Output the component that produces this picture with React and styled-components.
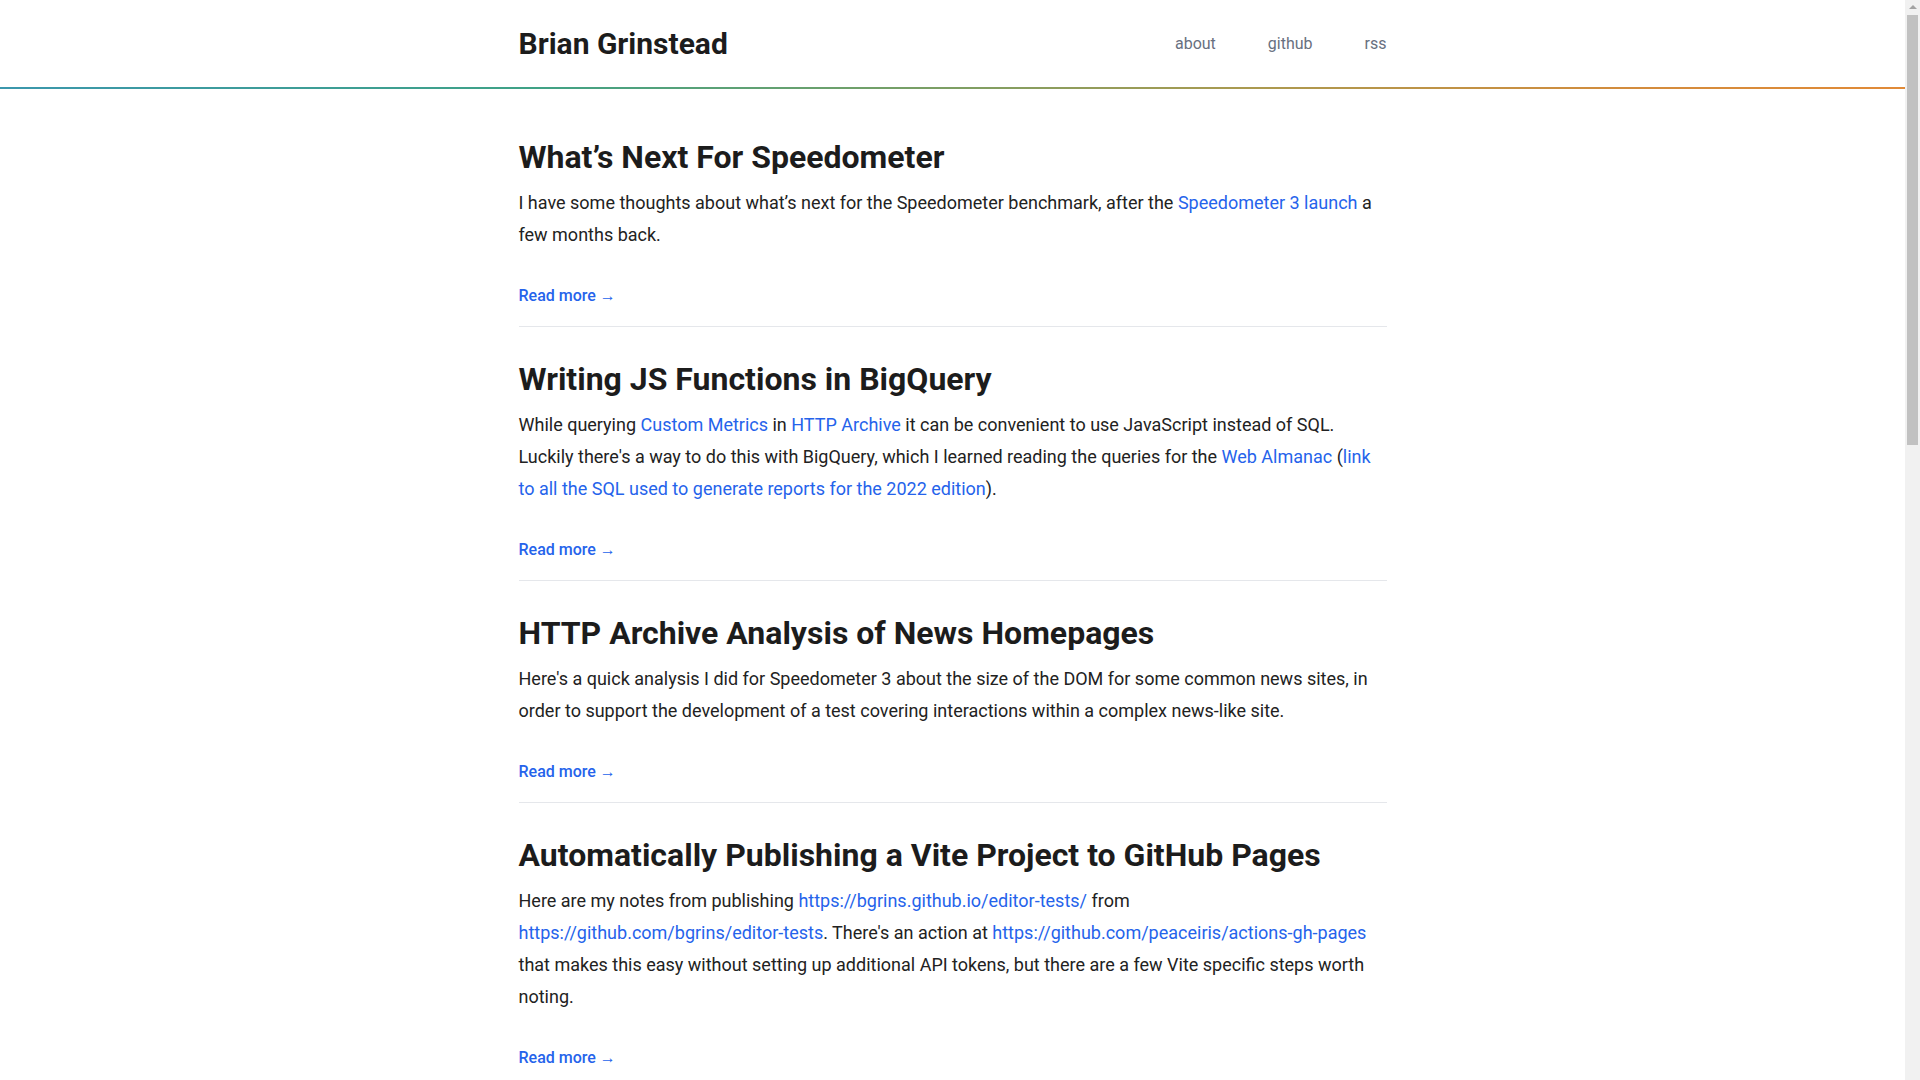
import React from 'react'
import styled, { createGlobalStyle } from 'styled-components'

const GlobalStyle = createGlobalStyle`
  html, body {
    margin: 0;
    padding: 0;
    background: #ffffff;
  }
  body {
    font-family: Roboto, "Liberation Sans", Arial, sans-serif;
    color: #222222;
    -webkit-font-smoothing: antialiased;
  }
  a {
    color: #2563eb;
    text-decoration: none;
  }
`

// the reference was taken with a classic scrollbar, so keep its 15px aside
const Page = styled.div`
  padding-right: 15px;
`

const ScrollRail = styled.div`
  position: fixed;
  top: 0;
  right: 0;
  bottom: 0;
  width: 15px;
  background: #f1f1f1;
  display: flex;
  flex-direction: column;
  align-items: center;
`

const ScrollArrow = styled.div`
  margin-top: 5px;
  width: 0;
  height: 0;
  border-left: 4px solid transparent;
  border-right: 4px solid transparent;
  border-bottom: 4px solid #a3a3a3;
`

const ScrollThumb = styled.div`
  margin-top: 6px;
  width: 11px;
  height: 430px;
  background: #c1c1c1;
`

const Header = styled.header`
  border-bottom: 2px solid transparent;
  border-image: linear-gradient(
      to right,
      #3b97ad 0%,
      #3fa286 28%,
      #6fa06a 45%,
      #a99a50 65%,
      #d28c3d 85%,
      #e18a37 100%
    )
    1;
`

const HeaderInner = styled.div`
  max-width: 900px;
  margin: 0 auto;
  padding: 0 16px;
  height: 87px;
  box-sizing: border-box;
  display: flex;
  align-items: center;
  justify-content: space-between;
`

const SiteTitle = styled.a`
  font-size: 30px;
  line-height: 36px;
  font-weight: 700;
  && {
    color: #1c1c1c;
  }
`

const Nav = styled.nav`
  display: flex;
  align-items: center;
  gap: 52px;
`

const NavLink = styled.a`
  font-size: 16px;
  line-height: 24px;
  && {
    color: #687080;
  }
`

const Main = styled.main`
  max-width: 900px;
  margin: 0 auto;
  padding: 16px 16px 64px;
  box-sizing: border-box;
`

const Post = styled.article`
  padding: 32px 0 16px;
  border-bottom: 1px solid #e5e7eb;
`

const PostTitle = styled.h2`
  margin: 0 0 10px;
  font-size: 32px;
  line-height: 40px;
  font-weight: 700;
  color: #1c1c1c;
`

const Excerpt = styled.p`
  margin: 0;
  font-size: 18px;
  line-height: 32px;
`

const ReadMore = styled.a`
  display: inline-block;
  margin-top: 31px;
  font-size: 16px;
  line-height: 28px;
  font-weight: 500;
`

const posts = [
  {
    title: 'What’s Next For Speedometer',
    body: (
      <>
        I have some thoughts about what’s next for the Speedometer benchmark, after the{' '}
        <a href="#">Speedometer 3 launch</a> a few months back.
      </>
    ),
  },
  {
    title: 'Writing JS Functions in BigQuery',
    body: (
      <>
        While querying <a href="#">Custom Metrics</a> in <a href="#">HTTP Archive</a> it can be
        convenient to use JavaScript instead of SQL. Luckily there's a way to do this with BigQuery,
        which I learned reading the queries for the <a href="#">Web Almanac</a> (
        <a href="#">link to all the SQL used to generate reports for the 2022 edition</a>).
      </>
    ),
  },
  {
    title: 'HTTP Archive Analysis of News Homepages',
    body: (
      <>
        Here's a quick analysis I did for Speedometer 3 about the size of the DOM for some common
        news sites, in order to support the development of a test covering interactions within a
        complex news-like site.
      </>
    ),
  },
  {
    title: 'Automatically Publishing a Vite Project to GitHub Pages',
    body: (
      <>
        Here are my notes from publishing <a href="#">https://bgrins.github.io/editor-tests/</a> from{' '}
        <a href="#">https://github.com/bgrins/editor-tests</a>. There's an action at{' '}
        <a href="#">https://github.com/peaceiris/actions-gh-pages</a> that makes this easy without
        setting up additional API tokens, but there are a few Vite specific steps worth noting.
      </>
    ),
  },
  {
    title: 'Measuring DOM Size Across the Web',
    body: (
      <>
        Some notes on counting elements, depth and attributes on popular pages, and what those
        numbers tell us about writing realistic benchmark workloads.
      </>
    ),
  },
  {
    title: 'Using the Browser Toolbox',
    body: (
      <>
        A short walkthrough of debugging the browser frontend itself with the Browser Toolbox, and a
        few tips for getting started quickly.
      </>
    ),
  },
  {
    title: 'Running SpiderMonkey in WebAssembly',
    body: (
      <>
        An experiment in compiling a JavaScript engine to WebAssembly and running it inside another
        JavaScript engine, and what I learned along the way.
      </>
    ),
  },
  {
    title: 'Profiling Page Load',
    body: (
      <>
        Some thoughts on recording performance profiles during page load and sharing them so others
        can dig into the results.
      </>
    ),
  },
  {
    title: 'Notes on Web Components',
    body: (
      <>
        A collection of links and notes I keep coming back to when building small components with
        Custom Elements and Shadow DOM.
      </>
    ),
  },
]

function App() {
  return (
    <Page>
      <GlobalStyle />
      <Header>
        <HeaderInner>
          <SiteTitle href="#">Brian Grinstead</SiteTitle>
          <Nav>
            <NavLink href="#">about</NavLink>
            <NavLink href="#">github</NavLink>
            <NavLink href="#">rss</NavLink>
          </Nav>
        </HeaderInner>
      </Header>
      <Main>
        {posts.map((post) => (
          <Post key={post.title}>
            <PostTitle>{post.title}</PostTitle>
            <Excerpt>{post.body}</Excerpt>
            <ReadMore href="#">Read more →</ReadMore>
          </Post>
        ))}
      </Main>
      <ScrollRail>
        <ScrollArrow />
        <ScrollThumb />
      </ScrollRail>
    </Page>
  )
}

export default App
